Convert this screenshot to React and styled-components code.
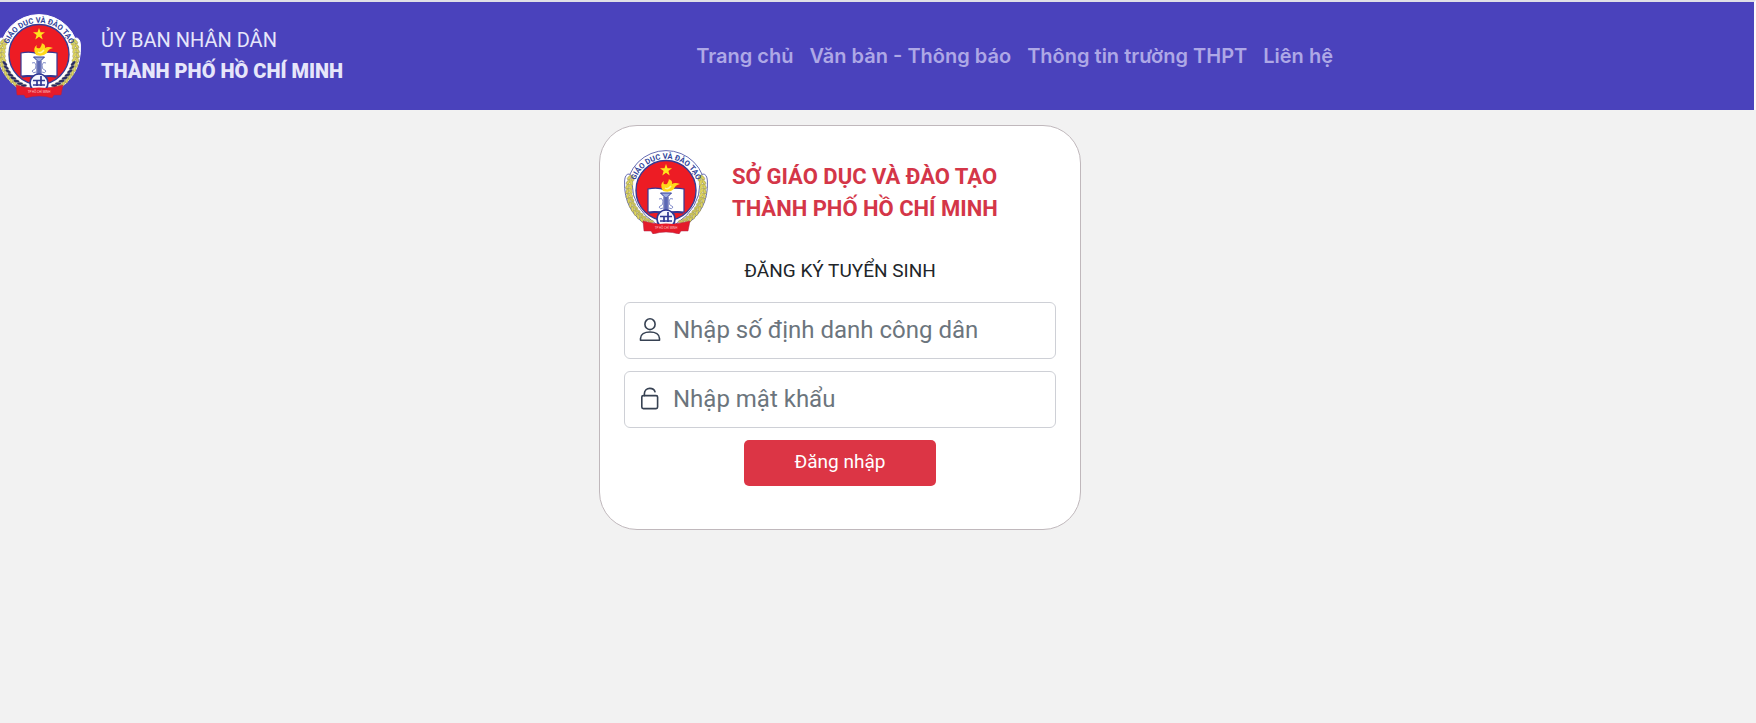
import React, { useId } from "react";
import styled, { createGlobalStyle } from "styled-components";

const GlobalStyle = createGlobalStyle`
  *, *::before, *::after { box-sizing: border-box; }
  body {
    margin: 0;
    background: #f2f2f2;
    color: #212529;
    font-family: Roboto, "Liberation Sans", sans-serif;
  }
`;

const Page = styled.div`
  overflow-x: hidden;
`;

const Header = styled.header`
  display: flex;
  align-items: center;
  min-height: 110px;
  padding-right: 68px;
  border-top: 2px solid #dfdfe6;
  border-right: 2px solid #fafafa;
  background: #4a42bc;
`;

const Brand = styled.a`
  display: flex;
  align-items: center;
  gap: 20px;
  margin-left: -3px;
  color: #e6e6fa;
  text-decoration: none;
`;

const BrandText = styled.span`
  display: flex;
  flex-direction: column;
  font-size: 20px;
  line-height: 31px;
  white-space: nowrap;
`;

const BrandCity = styled.strong`
  font-weight: 900;
`;

const Nav = styled.nav`
  display: flex;
  gap: 16px;
  margin: 0 auto;
`;

const NavLink = styled.a`
  color: #aea8e6;
  font: 600 20px/30px Inter, Roboto, sans-serif;
  text-decoration: none;
  white-space: nowrap;
`;

const Main = styled.main`
  display: flex;
  justify-content: center;
  padding: 15px 76px 24px 0;
`;

const Card = styled.form`
  width: 100%;
  max-width: 482px;
  padding: 24px 24px 43px;
  border: 1px solid #c0b8bc;
  border-radius: 38px;
  background: #fff;
`;

const CardHead = styled.div`
  display: flex;
  align-items: center;
  gap: 24px;
`;

const Department = styled.h1`
  margin: 0;
  padding-top: 2px;
  color: #d43648;
  font-size: 22px;
  font-weight: 700;
  line-height: 32px;
`;

const Subtitle = styled.h2`
  margin: 22px 0 16px;
  font-size: 19px;
  font-weight: 400;
  line-height: 30px;
  text-align: center;
`;

const Field = styled.label`
  display: flex;
  align-items: center;
  gap: 12px;
  height: 57px;
  margin-bottom: 12px;
  padding: 0 12px 2px;
  border: 1px solid #ced0d6;
  border-radius: 6px;
`;

const FieldIcon = styled.svg`
  flex: none;
  width: 24px;
  height: 24px;
  fill: none;
  stroke: #364152;
  stroke-width: 1.6;
  stroke-linejoin: round;
  stroke-linecap: round;
`;

const Input = styled.input`
  flex: 1;
  min-width: 0;
  padding: 0;
  border: 0;
  outline: 0;
  background: transparent;
  color: #212529;
  font: 400 24px/36px Roboto, sans-serif;
  &::placeholder { color: #6c757d; opacity: 1; }
`;

const Submit = styled.button`
  display: block;
  width: 192px;
  height: 46px;
  margin: 0 auto;
  padding: 0 0 2px;
  border: 0;
  border-radius: 5px;
  background: #dc3545;
  color: #fff;
  font: 400 19px/28px Roboto, sans-serif;
  cursor: pointer;
`;

const EmblemSvg = styled.svg`
  flex: none;
  width: 84px;
  height: 84px;
`;

const WREATH = Array.from({ length: 13 }, (_, i) => {
  const deg = 198 - i * 7;
  const a = (deg * Math.PI) / 180;
  return {
    x: 42 + 37 * Math.cos(a),
    y: 40 + 36.5 * Math.sin(a),
    turn: deg + 90,
  };
});

function WreathSide({ rim, leaf }) {
  return (
    <g>
      <path d="M.6 31Q1 24 5 24Q9 25 8 33Q8 58 32 74L27 78Q-1 62 .6 31Z" fill="#fff" stroke={rim} strokeWidth="1" />
      {WREATH.map((g, i) => (
        <g key={i} transform={`translate(${g.x} ${g.y}) rotate(${g.turn})`}>
          <ellipse cx="0" cy="-1.7" rx="3" ry="1.4" transform="rotate(28)" fill="#ded45c" stroke="#8c8858" strokeWidth=".5" />
          <ellipse cx="0" cy="1.7" rx="3" ry="1.4" transform="rotate(-28)" fill={i > 4 ? leaf : "#ded45c"} stroke="#8c8858" strokeWidth=".3" />
        </g>
      ))}
    </g>
  );
}

function Emblem({ rim, leaf }) {
  const arc = useId();
  return (
    <EmblemSvg viewBox="0 0 84 84" role="img" aria-label="Giáo dục và Đào tạo">
      <circle cx="42" cy="40" r="39.4" fill="#fff" stroke={rim} strokeWidth="1" />
      <WreathSide rim={rim} leaf={leaf} />
      <g transform="matrix(-1 0 0 1 84 0)">
        <WreathSide rim={rim} leaf={leaf} />
      </g>
      <circle cx="42" cy="40.5" r="30" fill="#ed1c24" stroke="#383c94" strokeWidth="1.4" />
      <path id={arc} d="M9.6 45A32.6 32.6 0 1 1 74.4 45" fill="none" />
      <text fill="#30449a" fontFamily="Roboto, sans-serif" fontSize="7.6" fontWeight="700" textAnchor="middle">
        <textPath href={`#${arc}`} startOffset="50%">GIÁO DỤC VÀ ĐÀO TẠO</textPath>
      </text>
      <path d="M42 14l1.5 4.3h4.5l-3.6 2.7 1.3 4.4-3.7-2.7-3.7 2.7 1.3-4.4-3.6-2.7h4.5z" fill="#ffe51c" />
      <path d="M24 39Q34 37 41 40Q49 37 60 39V62Q50 61 42 63Q34 61 24 62Z" fill="#fff" stroke="#343795" strokeWidth="1.2" />
      <path d="M39 41Q35 34 40 31Q38 35 43 34Q46 29 44 29Q49 30 48 34Q51 32 56 34Q51 35 50 39Q46 43 39 41Z" fill="#ffd91a" />
      <path d="M41 38Q44 40 47 36" fill="none" stroke="#fff49a" strokeWidth="1.5" />
      <path d="M36.5 43H47.5L44 46.5V62H40V46.5Z" fill="#9eace0" stroke="#303994" strokeWidth="1" />
      <path d="M42 47V62" stroke="#303994" strokeWidth="1.2" />
      <path d="M35 49Q38 47 39 51T35 57Q36 60 39 58M49 49Q46 47 45 51T49 57Q48 60 45 58" fill="none" stroke="#7580c4" strokeWidth=".9" />
      <path d="M25 63Q34 61 41 64M43 64Q51 61 59 63" fill="none" stroke="#303994" strokeWidth="1.5" />
      <path d="M19 71Q31 75 42 73Q53 75 66 71L64 81L57 81L55 84Q42 80 29 84L27 81L20 81Z" fill="#e51b2a" stroke="#ad2449" strokeWidth=".5" />
      <circle cx="42" cy="69" r="9" fill="#f5f6ff" stroke="#303994" strokeWidth="1.7" />
      <path d="M36 66.5H48M36 71H48M40 66V72M44 62V72" stroke="#303994" strokeWidth="1.7" fill="none" />
      <path d="M27 75Q42 72 57 75V81Q42 77 27 81Z" fill="#e51b2a" />
      <text x="42" y="79" fill="#ffc4c4" fontFamily="Roboto, sans-serif" fontSize="3" textAnchor="middle">TP HỒ CHÍ MINH</text>
    </EmblemSvg>
  );
}

const LINKS = ["Trang chủ", "Văn bản - Thông báo", "Thông tin trường THPT", "Liên hệ"];

export default function App() {
  return (
    <Page>
      <GlobalStyle />
      <Header>
        <Brand href="#">
          <Emblem rim="#fff" leaf="#272b68" />
          <BrandText>
            <span>ỦY BAN NHÂN DÂN</span>
            <BrandCity>THÀNH PHỐ HỒ CHÍ MINH</BrandCity>
          </BrandText>
        </Brand>
        <Nav>
          {LINKS.map((label) => (
            <NavLink key={label} href="#">{label}</NavLink>
          ))}
        </Nav>
      </Header>
      <Main>
        <Card onSubmit={(e) => e.preventDefault()}>
          <CardHead>
            <Emblem rim="#686eb4" leaf="#c9c15a" />
            <Department>
              SỞ GIÁO DỤC VÀ ĐÀO TẠO
              <br />
              THÀNH PHỐ HỒ CHÍ MINH
            </Department>
          </CardHead>
          <Subtitle>ĐĂNG KÝ TUYỂN SINH</Subtitle>
          <Field>
            <FieldIcon viewBox="0 0 24 24" aria-hidden="true">
              <ellipse cx="13" cy="6.2" rx="5.1" ry="5.4" />
              <path d="M3.5 22.2V20.5C3.5 16.5 7.5 14 13 14S22.5 16.5 22.5 20.5V22.2Z" />
            </FieldIcon>
            <Input type="text" aria-label="Số định danh công dân" placeholder="Nhập số định danh công dân" />
          </Field>
          <Field>
            <FieldIcon viewBox="0 0 24 24" aria-hidden="true">
              <rect x="4.8" y="8.6" width="15.8" height="13" rx="1.5" />
              <path d="M7.4 8.6V6.6C7.4 3.3 9.8 1.4 12.8 1.4C15.4 1.4 17.4 2.6 18 4.8" />
            </FieldIcon>
            <Input type="password" aria-label="Mật khẩu" placeholder="Nhập mật khẩu" />
          </Field>
          <Submit type="submit">Đăng nhập</Submit>
        </Card>
      </Main>
    </Page>
  );
}
